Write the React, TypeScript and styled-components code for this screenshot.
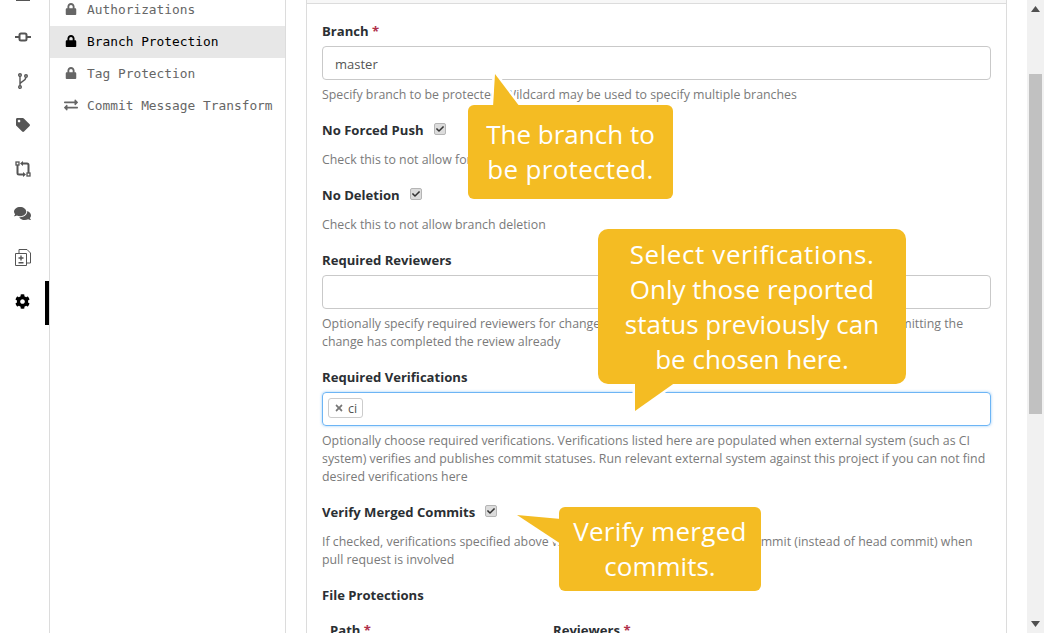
import React from "react";
import styled, { createGlobalStyle } from "styled-components";
import { FaLock, FaExchangeAlt, FaTag, FaCog, FaComments, FaTimes, FaCheck } from "react-icons/fa";

const Global = createGlobalStyle`
  html, body { margin: 0; padding: 0; height: 100%; overflow: hidden; background: #fff; }
  * { box-sizing: border-box; }
`;

const Page = styled.div`
  position: relative;
  display: flex;
  height: 633px;
  width: 1044px;
  overflow: hidden;
  font-family: "Open Sans", "Noto Sans", sans-serif;
  font-size: 12.35px;
  color: #212529;
`;

const Rail = styled.nav`
  width: 50px;
  flex: none;
  margin-top: -27px;
  border-right: 1px solid #dcdcdc;
`;

const RailItem = styled.div<{ $active?: boolean }>`
  height: 44px;
  display: flex;
  align-items: center;
  justify-content: center;
  width: 49px;
  padding-bottom: 4px;
  color: ${(p) => (p.$active ? "#000" : "#555")};
  border-right: 4px solid ${(p) => (p.$active ? "#000" : "transparent")};
`;

const SideNav = styled.nav`
  width: 236px;
  flex: none;
  margin-top: -6px;
  border-right: 1px solid #dcdcdc;
  font-family: "DejaVu Sans Mono", "Liberation Mono", monospace;
  font-size: 12.85px;
`;

const NavRow = styled.div<{ $active?: boolean }>`
  height: 32px;
  display: flex;
  align-items: center;
  padding-bottom: 2px;
  color: ${(p) => (p.$active ? "#000" : "#666")};
  background: ${(p) => (p.$active ? "#e7e7e7" : "transparent")};
`;

const NavIcon = styled.span`
  width: 37px;
  flex: none;
  display: flex;
  justify-content: center;
  padding-left: 5px;
  font-size: 12px;
`;

const Main = styled.main`
  flex: 1;
  min-width: 0;
  padding: 0 20px;
`;

const Card = styled.section`
  border-left: 1px solid #dcdcdc;
  border-right: 1px solid #dcdcdc;
  height: 100%;
`;

const CardHead = styled.div`
  height: 4px;
  background: #f7f7f7;
  border-bottom: 1px solid #dcdcdc;
`;

const CardBody = styled.div`
  padding: 18px 15px 0 15px;
`;

const Field = styled.div`
  margin-bottom: 17px;
`;

const Label = styled.label`
  display: block;
  font-weight: 700;
  font-size: 13.1px;
  line-height: 18px;
  color: #2b2f33;
  margin-bottom: 6px;
`;

const InlineLabel = styled(Label)`
  display: flex;
  align-items: center;
  margin-bottom: 12px;
`;

const Star = styled.span`
  color: #b0304a;
`;

const TextBox = styled.div<{ $focus?: boolean }>`
  height: 34px;
  border: 1px solid ${(p) => (p.$focus ? "#6db5f5" : "#c9c9c9")};
  border-radius: 4px;
  display: flex;
  align-items: center;
  padding: 0 12px;
  font-size: 13px;
  color: #555;
  box-shadow: ${(p) => (p.$focus ? "0 0 3px rgba(70,160,240,.55)" : "none")};
  margin-bottom: 6px;
`;

const Value = styled.span`
  padding-top: 2px;
`;

const Help = styled.div`
  line-height: 18px;
  color: #7a7a7a;
`;

const Check = styled.span`
  width: 12px;
  height: 12px;
  margin-left: 10px;
  margin-top: -3px;
  border-radius: 2px;
  background: #dcdcdc;
  border: 1px solid #b5b5b5;
  display: inline-flex;
  align-items: center;
  justify-content: center;
  color: #333;
  font-size: 8px;
`;

const Tag = styled.span`
  height: 20px;
  margin: 0 0 2px -7px;
  padding: 0 5px;
  border: 1px solid #ccc;
  border-radius: 3px;
  display: inline-flex;
  align-items: center;
  gap: 4px;
  color: #555;
  font-size: 12.5px;
`;

const TagX = styled.span`
  color: #777;
  font-size: 10px;
  display: flex;
`;

const Columns = styled.div`
  display: flex;
  padding-left: 8px;
  font-weight: 700;
  font-size: 13.1px;
  line-height: 18px;
  color: #2b2f33;
`;

const PathCol = styled.div`
  width: 223px;
`;

const Callout = styled.div<{ $x: number; $y: number; $w: number; $h: number; $r: number }>`
  position: absolute;
  left: ${(p) => p.$x}px;
  top: ${(p) => p.$y}px;
  width: ${(p) => p.$w}px;
  height: ${(p) => p.$h}px;
  border-radius: ${(p) => p.$r}px;
  background: #f4bc23;
  color: #fff;
  font-family: "Open Sans", sans-serif;
  font-size: 26px;
  line-height: 35px;
  text-align: center;
  display: flex;
  align-items: center;
  justify-content: center;
`;

const CalloutLine = styled.span<{ $spread?: number }>`
  letter-spacing: ${(p) => p.$spread ?? 0}px;
`;

const Tail = styled.svg`
  position: absolute;
  left: 0;
  top: 0;
  overflow: visible;
`;

const TailShape = styled.path`
  fill: #f4bc23;
  stroke: #fff;
  stroke-width: 5px;
  paint-order: stroke;
`;

const Scrollbar = styled.div`
  width: 17px;
  flex: none;
  background: #f1f1f1;
  display: flex;
  flex-direction: column;
  align-items: center;
  justify-content: space-between;
  padding: 6px 0;
`;

const Thumb = styled.div`
  position: absolute;
  right: 2px;
  top: 74px;
  width: 13px;
  height: 340px;
  background: #c1c1c1;
`;

const BarIcon = () => (
  <svg width="14" height="16" viewBox="0 0 14 16" fill="currentColor">
    <rect x="0" y="14" width="14" height="2" />
  </svg>
);
const CommitIcon = () => (
  <svg width="16" height="16" viewBox="0 0 16 16" fill="none" stroke="currentColor" strokeWidth="2">
    <rect x="4.5" y="4.5" width="7" height="7" rx="1.5" />
    <path d="M0 8h4.5M11.500 8H16" />
  </svg>
);
const BranchIcon = () => (
  <svg width="10" height="16" viewBox="0 0 10 16" fill="none" stroke="currentColor" strokeWidth="1.4">
    <circle cx="2" cy="2" r="1.3" />
    <circle cx="2" cy="14" r="1.3" />
    <circle cx="8" cy="3" r="1.3" />
    <path d="M2 3.300v9.400M2 11c.5-3 5.500-2.500 6-6.700" />
  </svg>
);
const PullIcon = () => (
  <svg width="16" height="16" viewBox="0 0 16 16" fill="none" stroke="currentColor" strokeWidth="1.300">
    <rect x="1" y="1" width="3" height="3" />
    <rect x="12" y="12" width="3" height="3" />
    <path d="M2.500 4v8c0 1 .5 1.500 1.500 1.500h4.500M13.500 12V4c0-1-.5-1.500-1.500-1.500H7.500" strokeWidth="2" />
    <path d="M8 0L5 2.500 8 5zM8 11l3 2.500L8 16z" fill="currentColor" stroke="none" />
  </svg>
);
const DiffIcon = () => (
  <svg width="16" height="18" viewBox="0 0 16 18" fill="none" stroke="currentColor" strokeWidth="1">
    <path d="M.5 5.500h11v12H.5zM4 5.500V1.500h8l3.500 3.500v10h-4" />
    <path d="M6 7.500v5M3.500 10h5M3.500 14.800h5" strokeWidth="1.400" />
  </svg>
);

export default function App() {
  return (
    <Page>
      <Global />
      <Rail>
        <RailItem><BarIcon /></RailItem>
        <RailItem><CommitIcon /></RailItem>
        <RailItem><BranchIcon /></RailItem>
        <RailItem><FaTag size={14} /></RailItem>
        <RailItem><PullIcon /></RailItem>
        <RailItem><FaComments size={17} /></RailItem>
        <RailItem><DiffIcon /></RailItem>
        <RailItem $active><FaCog size={15} /></RailItem>
      </Rail>
      <SideNav>
        <NavRow><NavIcon><FaLock /></NavIcon>Authorizations</NavRow>
        <NavRow $active><NavIcon><FaLock /></NavIcon>Branch Protection</NavRow>
        <NavRow><NavIcon><FaLock /></NavIcon>Tag Protection</NavRow>
        <NavRow><NavIcon><FaExchangeAlt size={14} /></NavIcon>Commit Message Transform</NavRow>
      </SideNav>
      <Main>
        <Card>
          <CardHead />
          <CardBody>
            <Field>
              <Label>Branch <Star>*</Star></Label>
              <TextBox><Value>master</Value></TextBox>
              <Help>Specify branch to be protected. Wildcard may be used to specify multiple branches</Help>
            </Field>
            <Field>
              <InlineLabel>No Forced Push <Check><FaCheck /></Check></InlineLabel>
              <Help>Check this to not allow forced push</Help>
            </Field>
            <Field>
              <InlineLabel>No Deletion <Check><FaCheck /></Check></InlineLabel>
              <Help>Check this to not allow branch deletion</Help>
            </Field>
            <Field>
              <Label>Required Reviewers</Label>
              <TextBox />
              <Help>Optionally specify required reviewers for changes of the specified branches. Note that if the user submitting the change has completed the review already</Help>
            </Field>
            <Field>
              <Label>Required Verifications</Label>
              <TextBox $focus><Tag><TagX><FaTimes /></TagX>ci</Tag></TextBox>
              <Help>Optionally choose required verifications. Verifications listed here are populated when external system (such as CI system) verifies and publishes commit statuses. Run relevant external system against this project if you can not find desired verifications here</Help>
            </Field>
            <Field>
              <InlineLabel>Verify Merged Commits <Check><FaCheck /></Check></InlineLabel>
              <Help>If checked, verifications specified above will have to be passed on merged commit (instead of head commit) when pull request is involved</Help>
            </Field>
            <Field>
              <Label>File Protections</Label>
            </Field>
            <Columns>
              <PathCol>Path <Star>*</Star></PathCol>
              <div>Reviewers <Star>*</Star></div>
            </Columns>
          </CardBody>
        </Card>
      </Main>
      <Scrollbar>
        <svg width="9" height="6" viewBox="0 0 9 6"><path d="M4.500 0L9 6H0z" fill="#505050" /></svg>
        <svg width="9" height="6" viewBox="0 0 9 6"><path d="M0 0h9L4.500 6z" fill="#505050" /></svg>
      </Scrollbar>
      <Thumb />

      <Tail width="1" height="1">
        <TailShape d="M495 74 L520 107 L493 107 Z" />
        <TailShape d="M635 411 L676 382 L635 382 Z" />
        <TailShape d="M517 515 L561 519 L561 544 Z" />
      </Tail>
      <Callout $x={468} $y={105} $w={205} $h={94} $r={6}>
        <div>
          The branch to<br />
          <CalloutLine $spread={0.3}>be protected.</CalloutLine>
        </div>
      </Callout>
      <Callout $x={598} $y={229} $w={308} $h={155} $r={10}>
        <div>
          <CalloutLine $spread={0.6}>Select verifications.</CalloutLine><br />
          Only those reported<br />
          status previously can<br />
          be chosen here.
        </div>
      </Callout>
      <Callout $x={559} $y={507} $w={202} $h={84} $r={6}>
        <div>
          <CalloutLine $spread={0.3}>Verify merged</CalloutLine><br />
          commits.
        </div>
      </Callout>
    </Page>
  );
}
